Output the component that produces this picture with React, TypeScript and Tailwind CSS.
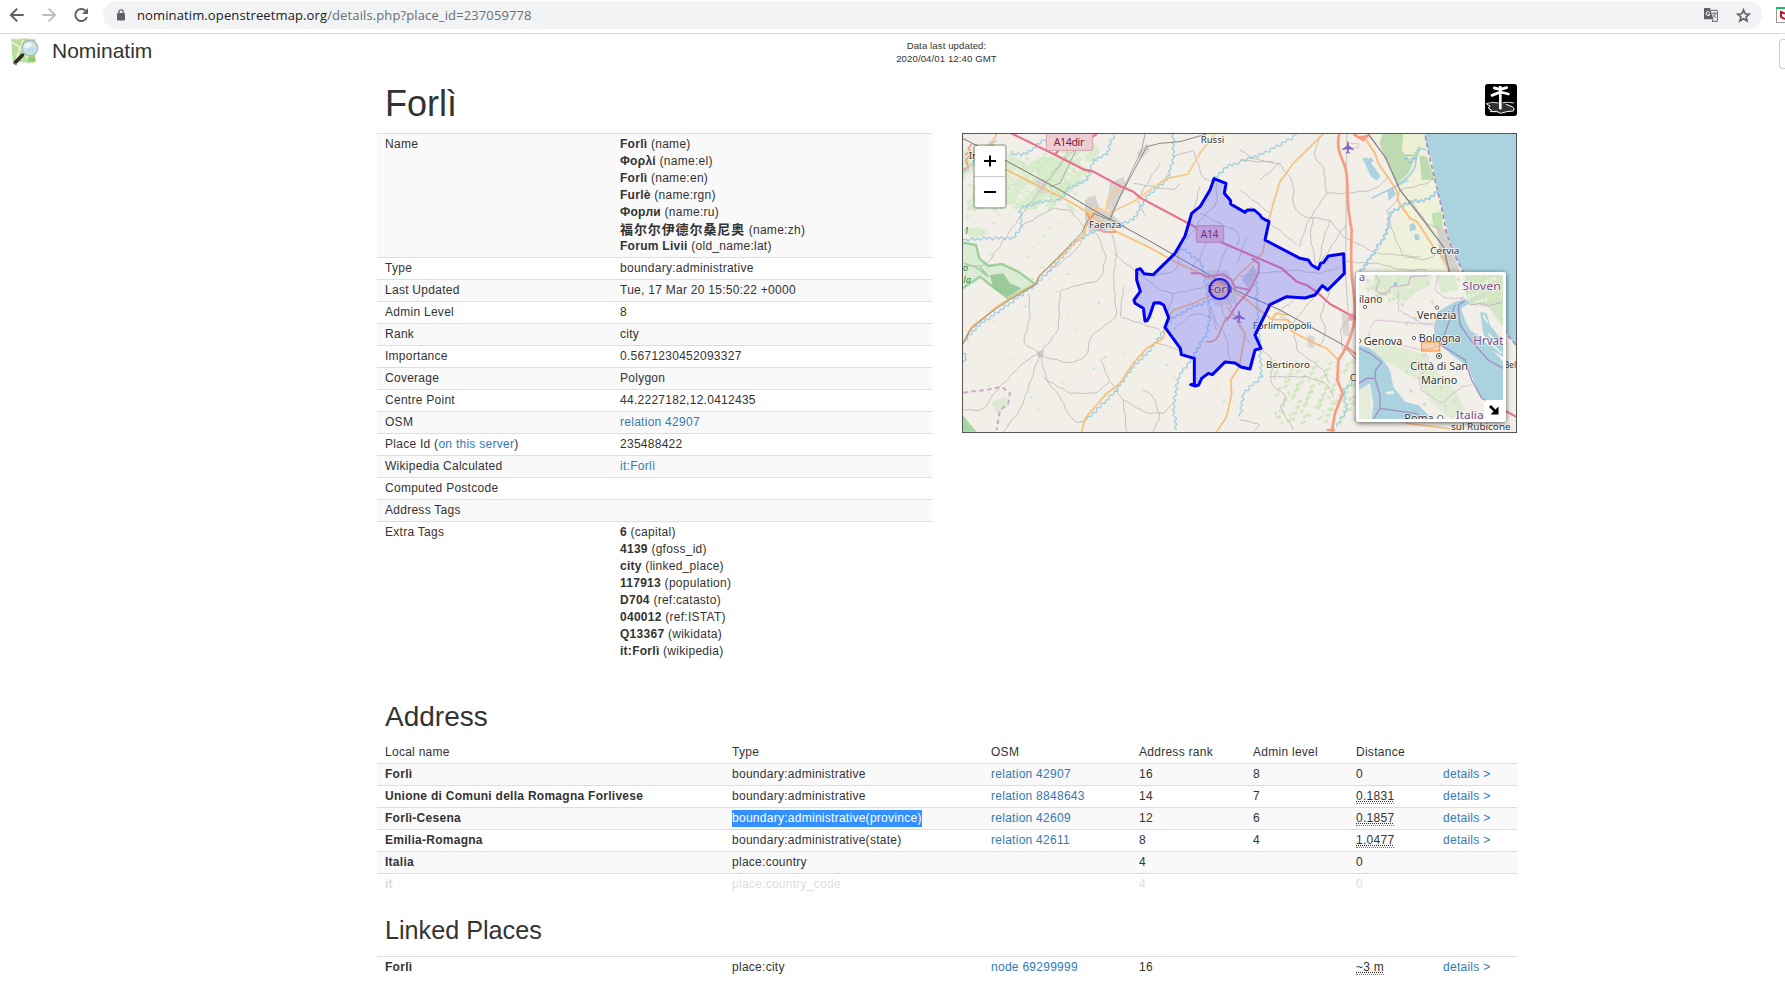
import React from "react";

type Pt = [number, number];

/* Subdivides a polyline and pushes the points sideways, giving a meandering line. */
function meander(src: string, amp: number, step: number): string {
  const pts: Pt[] = src.split(" ").map((p) => p.split(",").map(Number) as Pt);
  const out: string[] = [];
  let k = 1;
  for (let i = 0; i < pts.length - 1; i++) {
    const [x1, y1] = pts[i];
    const [x2, y2] = pts[i + 1];
    const len = Math.hypot(x2 - x1, y2 - y1) || 1;
    const n = Math.max(1, Math.round(len / step));
    for (let j = 0; j < n; j++) {
      const t = j / n;
      const side = (k % 2 ? 1 : -1) * amp * (0.5 + 0.5 * Math.abs(Math.sin(k * 2.3 + x1)));
      const off = i === 0 && j === 0 ? 0 : side;
      out.push(
        `${(x1 + (x2 - x1) * t - ((y2 - y1) / len) * off).toFixed(1)},${(y1 + (y2 - y1) * t + ((x2 - x1) / len) * off).toFixed(1)}`
      );
      k++;
    }
  }
  out.push(pts[pts.length - 1].join(","));
  let d = `M${out[0]}`;
  for (let i = 1; i < out.length - 1; i++) {
    const [ax, ay] = out[i].split(",").map(Number);
    const [bx, by] = out[i + 1].split(",").map(Number);
    d += `Q${ax},${ay} ${((ax + bx) / 2).toFixed(1)},${((ay + by) / 2).toFixed(1)}`;
  }
  return d + `L${out[out.length - 1]}`;
}

const rivers: string[] = [
  "8,330 80,325 160,325 185,290 180,235 240,215 300,210 325,175 380,150 400,90 440,75 460,15",
  "150,75 200,70 240,40 270,15",
  "8,640 50,590 150,520 230,460 290,400 340,340 400,305 470,285 520,270 560,200 620,150 640,90 640,12",
  "380,870 420,830 470,780 520,710 570,660 600,620 630,570 700,530 760,510",
  "650,900 640,830 655,740 700,680 740,610 750,560 745,500",
  "745,500 725,400 660,350",
  "760,150 800,110 840,95",
  "840,95 900,75 960,45 1010,15",
  "840,860 850,790 905,740 890,500 890,440",
  "1200,430 1240,370 1280,310 1290,250 1350,215 1400,210 1440,180",
  "1130,890 1160,840 1150,780 1200,740",
  "8,130 30,110 60,60 110,30",
  "8,700 20,680 8,660",
];

const minorRoads: string[] = [
  "8,410 80,405 180,260 240,180 320,80 400,20",
  "180,290 280,235 330,240 380,300 350,360 260,430",
  "410,310 440,380 420,450 300,480 295,600 240,670 190,640 210,560 205,490",
  "455,310 470,370 460,450 470,560 390,620 380,680 330,700 250,680",
  "460,370 560,450",
  "8,840 70,840 110,780 200,690 240,670",
  "240,670 210,760 180,840 130,905",
  "240,670 260,750 330,790 410,790 450,755 420,690 440,680",
  "250,740 300,800 330,860 350,880 380,870",
  "450,755 490,810 500,905",
  "490,810 560,850 610,850 640,820",
  "580,905 600,860 580,800 550,780",
  "490,470 480,560 600,600",
  "590,640 660,660 700,690",
  "250,170 310,90 350,15",
  "520,160 640,180 660,160",
  "640,80 700,60 730,150 780,150",
  "560,260 530,210 600,100",
  "700,250 720,170",
  "680,330 730,260 770,220 770,160",
  "580,440 650,420 660,350",
  "560,450 600,480 640,490 700,480 760,460",
  "640,490 620,560",
  "720,250 840,310 830,350",
  "770,480 800,500 840,590 870,640",
  "780,510 790,560 830,570",
  "750,530 770,580 800,620 810,690",
  "640,600 700,550 760,560 770,600",
  "690,420 720,380 740,340",
  "800,350 770,430",
  "840,440 900,430 1000,420 1080,430 1140,410",
  "860,320 830,400",
  "840,90 960,100 1000,160 1000,230 1030,260 1110,270 1150,320 1250,370 1380,380",
  "840,60 890,90 940,95",
  "900,150 960,100",
  "1080,15 1060,80 1090,110 1100,190 1040,280 1020,350",
  "1100,190 1160,190 1240,180 1290,140",
  "870,230 1010,345",
  "840,180 930,250",
  "1060,260 1050,320 1070,410",
  "1110,270 1090,330 1075,410",
  "1160,280 1080,400",
  "1150,395 1250,400 1330,420 1400,420",
  "1110,480 1080,560 1100,600 1080,650 1040,620",
  "1065,495 1000,580 960,560",
  "1000,580 1010,660 1090,720 1110,760",
  "1000,510 940,560 930,600",
  "905,660 940,690 930,760 980,800 960,830",
  "930,740 1040,740 1100,760 1120,800",
  "960,830 1000,900",
  "840,870 900,880 880,905",
  "1160,570 1140,600 1150,660",
  "1320,180 1400,160 1430,140",
  "1320,180 1300,230 1280,240",
  "1350,210 1400,280 1440,300",
  "1280,240 1300,310 1330,380 1400,390 1440,360",
];

const woods: string[] = [
  "100,60 150,75 200,100 250,80 330,80 400,130 380,150 300,215 260,200 220,240 170,235 130,210 60,240 20,240 60,120",
  "8,60 50,50 60,90 30,130 8,150",
  "300,12 380,12 420,60 400,100 340,80 280,60",
  "8,300 60,290 90,310 40,325",
];

const boundary =
  "762,146 798,160 793,190 812,212 812,222 855,247 862,240 883,240 900,255 906,264 927,275 915,330 1020,385 1045,390 1055,405 1075,417 1082,400 1090,398 1105,378 1151,371 1153,430 1103,480 1087,467 1065,495 1035,504 980,500 930,524 885,615 903,655 885,660 870,717 843,711 825,699 795,696 757,734 745,730 725,745 716,765 706,768 692,764 703,762 703,685 664,674 661,655 615,592 626,563 611,525 598,518 582,519 568,560 561,572 555,573 550,535 525,520 522,510 541,484 530,450 530,420 541,416 552,431 580,434 645,370 675,318 695,250 720,230 750,180";

const Line = ({ d, c, w }: { d: string; c: string; w: number }) => (
  <polyline points={d} fill="none" stroke={c} strokeWidth={w} strokeLinejoin="round" />
);

const Label = ({ x, y, s = 29, c = "#333", w, children }: { x: number; y: number; s?: number; c?: string; w?: number; children: string }) => (
  <text
    x={x}
    y={y}
    fontSize={s}
    fill={c}
    textLength={w}
    lengthAdjust="spacingAndGlyphs"
    stroke="#fff"
    strokeOpacity={0.75}
    strokeWidth={5}
    paintOrder="stroke"
    fontFamily='"Noto Sans", sans-serif'
  >
    {children}
  </text>
);

const plane = "M-2,-17 Q0,-21 2,-17 L3,-6 L17,4 L17,8 L3,4 L2,12 L7,16 L7,18 L0,16 L-7,18 L-7,16 L-2,12 L-3,4 L-17,8 L-17,4 L-3,-6Z";

function MapDrawing() {
  return (
    <svg viewBox="9 12 1659 894" className="block h-[298px] w-[553px]" preserveAspectRatio="none">
      <rect x="0" y="0" width="1700" height="920" fill="#f2efe9" />
      {/* farmland and woods */}
      <path d="M1240,12 L1395,12 L1440,180 L1480,420 L1280,430 L1240,400 L1290,290 L1340,230 L1300,130Z" fill="#f0f1da" />
      {woods.map((p, i) => (
        <polygon key={i} points={p} fill="#cdeac0" opacity={0.65} />
      ))}
      {Array.from({ length: 260 }, (_, i) => {
        const x = 12 + ((i * 97 + (i % 7) * 13) % 370);
        const y = 60 + ((i * 61 + (i % 5) * 17) % (i % 4 ? 180 : 400));
        return <path key={i} d={`M${x},${y} l${4 + (i % 5) * 3},-4 l4,6 l-6,${2 + (i % 4) * 3} l-6,-3Z`} fill={i % 3 ? "#cfeabf" : "#f2efe9"} opacity={0.85} />;
      })}
      {Array.from({ length: 170 }, (_, i) => {
        const x = 940 + ((i * 83 + (i % 7) * 19) % 250);
        const y = 690 + ((i * 47 + (i % 6) * 11) % 190);
        return <path key={i} d={`M${x},${y} l5,-4 l5,6 l-4,${3 + (i % 4) * 2} l-5,-3Z`} fill="#cbe6b8" opacity={0.8} />;
      })}
      {Array.from({ length: 40 }, (_, i) => {
        const x = 20 + ((i * 149) % 800);
        const y = 420 + ((i * 71) % 470);
        return <path key={i} d={`M${x},${y} l6,-4 l3,6 l-6,4Z`} fill={i % 4 ? "#dcecd0" : "#bfe6f0"} />;
      })}
      <path d="M8,335 L45,340 L60,390 L85,405 L130,400 L180,425 L225,460 L190,485 L145,505 L110,480 L90,460 L60,440 L8,475Z" fill="#dcebd4" />
      <path d="M90,435 L130,430 L150,460 L185,475 L145,500 L100,475Z" fill="#9ccb9a" />
      <path d="M10,338 L48,345 L58,385 L85,408 L125,402 L175,425 L225,462 L180,487 L145,506 L85,460 L60,440 L8,475" fill="none" stroke="#86c48b" strokeWidth="7" opacity="0.75" />
      <path d="M12,400 L45,410 L85,440 L60,410" fill="none" stroke="#86c48b" strokeWidth="5" opacity="0.7" />
      <path d="M8,855 L50,905 L8,905Z" fill="#a9d5a4" />
      <path d="M95,815 L140,800 L145,830 L110,850Z" fill="#dbead2" />
      <path d="M1268,12 L1330,12 L1385,45 L1345,130 L1312,160 L1285,100 L1258,40Z" fill="#bddab1" />
      <path d="M1330,12 L1393,12 L1398,50 L1375,50 L1350,90 L1325,60Z" fill="#edf0d3" />
      <path d="M1378,75 L1400,80 L1424,150 L1385,150Z" fill="#bddab1" />
      <path d="M1415,250 L1445,245 L1450,310 L1420,290Z" fill="#bfe3b0" />
      {/* built-up areas */}
      <path d="M375,210 L405,195 L420,240 L450,250 L500,290 L440,300 L390,310 L375,270Z" fill="#d5d2ce" />
      <path d="M450,160 L490,140 L500,170 L455,250 L440,230Z" fill="#d9d6d2" />
      <path d="M530,70 L560,40 L570,60 L540,90Z" fill="#d9d6d2" />
      <path d="M225,150 L255,145 L262,190 L235,190Z" fill="#d9d6d2" />
      <path d="M230,665 L252,660 L250,682 L235,682Z" fill="#d2cfcb" />
      <path d="M740,420 L800,420 L830,470 L830,520 L770,530 L740,490Z" fill="#dedbd7" />
      <path d="M845,450 L880,405 L892,430 L868,478Z" fill="#cfccd0" />
      <path d="M1430,290 L1462,300 L1475,360 L1500,425 L1465,425 L1440,380Z" fill="#d3d0cc" />
      <path d="M1145,550 L1165,550 L1170,620 L1148,615Z" fill="#dad7d3" />
      <path d="M1045,615 L1065,620 L1060,655 L1042,650Z" fill="#dad7d3" />
      {/* water */}
      <path
        d="M1393,10 L1400,50 L1415,90 L1425,150 L1445,230 L1462,300 L1480,370 L1512,430 L1560,520 L1640,610 L1675,660 L1675,10Z"
        fill="#aad3df"
      />
      <path d="M1207,85 L1220,82 L1262,138 L1250,152 L1232,138Z M1222,90 L1234,80 L1240,95 L1230,98Z" fill="#aad3df" />
      <path d="M1282,180 L1300,170 L1306,195 L1286,212Z M1348,285 L1362,278 L1370,297 L1350,305Z M1362,312 l14,0 l4,16 l-14,4Z" fill="#aad3df" />
      <path d="M1235,205 L1345,150" stroke="#aad3df" strokeWidth="5" />
      <path d="M1310,165 Q1370,130 1368,90 Q1375,45 1398,60" fill="none" stroke="#a5cfe0" strokeWidth="5" />
      <path d="M1338,76h20 M1333,86h12 M1355,86h15 M1345,97h10" stroke="#7ab8e8" strokeWidth="3" />
      {rivers.map((r, i) => (
        <path key={i} d={meander(r, 8, 9)} fill="none" stroke="#a5d0e2" strokeWidth={i === 9 ? 6 : 4.2} />
      ))}
      {/* minor roads */}
      {minorRoads.map((r, i) => (
        <path key={i} d={meander(r, 3.5, 22)} fill="none" stroke="#bdbbb8" strokeWidth="2.6" />
      ))}
      <path d="M1160,12 L1157,440 L1165,560" fill="none" stroke="#cfcdca" strokeWidth="4" />
      {/* main roads */}
      <Line d="135,117 230,165 330,215 385,248 420,275 470,305 560,348 640,392 740,440 800,470" c="#f9be72" w={5} />
      <path d="M380,255 L410,232 L450,248 L520,215 L620,145 L683,133 L720,70 L765,12" fill="none" stroke="#f9c987" strokeWidth="5" />
      <path d="M440,240 Q435,195 482,175" fill="none" stroke="#f9c987" strokeWidth="5" />
      <Line d="8,640 35,590 75,560 110,530 150,505 228,460 240,435 300,380 370,315 385,270 410,245" c="#f9be72" w={5} />
      <Line d="6,648 32,598 72,564 106,538 148,510 226,464 236,440 300,376 366,308 380,275 405,250" c="#777" w={2.4} />
      <Line d="365,905 375,865 410,825 440,790 480,760 520,700 560,655 610,625 620,570 640,540 700,520 745,500 760,480" c="#f9be72" w={5} />
      <path d="M770,905 L800,860 L815,790 L812,750 L838,710 L855,610 L825,560 L800,530" fill="none" stroke="#f9be72" strokeWidth="5" />
      <path d="M738,635 Q770,640 780,605 L800,560" fill="none" stroke="#f0a070" strokeWidth="5" />
      <path d="M1090,12 L1000,100 L960,155 L940,220 L925,275 L908,370 L840,430 L815,460" fill="none" stroke="#f9c080" strokeWidth="5" />
      <Line d="800,470 860,510 935,568 985,570 990,600 1060,640 1100,655 1135,690" c="#f9be72" w={5} />
      <path d="M935,568 L948,550 L985,555" fill="none" stroke="#f9be72" strokeWidth="5" />
      <path d="M1212,20 L1245,70 L1255,100 L1310,180 L1315,215 L1350,265 L1372,275 L1420,350 L1450,380 L1470,425" fill="none" stroke="#f9c080" strokeWidth="6" />
      <path d="M1300,700 L1340,880 L1500,900" fill="none" stroke="#f9c080" strokeWidth="5" />
      {/* railways */}
      <Line d="8,25 140,93 300,180 400,240 560,328 660,385 840,487 960,540 1150,645 1190,690" c="#777" w={3} />
      <Line d="400,250 450,270 480,200 560,50 600,40 660,35 740,12" c="#888" w={3} />
      <Line d="450,262 545,60 555,12" c="#999" w={2.5} />
      <Line d="270,170 300,160 370,15" c="#999" w={2.5} />
      <path d="M1225,12 L1275,80 L1320,180 L1390,270 L1450,350 L1468,425" fill="none" stroke="#858585" strokeWidth="4" />
      {/* trunk roads */}
      <path d="M1138,12 Q1128,45 1145,85 Q1165,120 1162,190 Q1165,250 1175,300 Q1172,370 1175,440 Q1190,540 1180,590 Q1165,650 1135,690 L1132,750 L1148,790 L1125,850 L1115,905" fill="none" stroke="#f79b83" strokeWidth="8" />
      <path d="M1180,12 L1210,30 L1222,14 M1195,22 L1225,20" stroke="#f79b83" strokeWidth="8" fill="none" />
      <path d="M1160,650 L1195,680 M1100,900 L1125,900" stroke="#f79b83" strokeWidth="7" />
      <path d="M8,120 L25,112 L18,90 L35,70 L25,55 L35,42 M15,75 L30,65" fill="none" stroke="#f79b83" strokeWidth="5" />
      <path d="M55,60 L90,50 L110,12 M120,70 L95,40" fill="none" stroke="#f9c080" strokeWidth="5" />
      <path d="M380,250 L400,285 L430,305 L468,306" fill="none" stroke="#f79b83" strokeWidth="6" />
      <path d="M692,430 L720,430 L740,440 L790,433 L815,450 L822,470 L870,480 L895,430 L897,400 L875,385" fill="none" stroke="#e88495" strokeWidth="6" />
      <path d="M870,480 L830,525 L800,572" fill="none" stroke="#e88495" strokeWidth="6" />
      {/* motorway */}
      <Line d="150,8 285,74 370,118 400,125 480,168 520,185 540,203 700,288 780,335 860,370 965,415 1010,455 1040,465 1075,490 1110,522 1180,560 1300,660 1668,860" c="#e8718d" w={6.5} />
      <Line d="285,74 300,55 380,30 410,12" c="#e8718d" w={6.5} />
      <path d="M1165,550 h18 v22 h-18Z" fill="#e892a2" opacity="0.8" />
      {/* administrative borders */}
      <path d="M10,788 L30,785 L80,780 L125,770 L150,790 L145,820 L120,840 L110,900" fill="none" stroke="#d3a9d3" strokeWidth="6" strokeDasharray="14 10" />
      <path d="M1396,18 L1408,80 L1425,150 L1445,235 L1460,310 L1482,372 L1512,430 L1580,540 L1668,645" fill="none" stroke="#b08bc0" strokeWidth="5" strokeDasharray="13 9" />
      <path d="M1165,41 h30 v12 h-20" fill="none" stroke="#d5cfc4" strokeWidth="3" />
      <path transform="translate(1164,53)" d={plane} fill="#8461c4" />
      <path transform="translate(837,561)" d={plane} fill="#8461c4" />
      {/* road shields */}
      <rect x="259" y="8" width="139" height="53" rx="5" fill="#edced4" stroke="#d9a0ab" strokeWidth="3" />
      <text x="281" y="47" fontSize="32" textLength="92" fill="#7a1a3c" fontFamily='"Noto Sans", sans-serif'>A14dir</text>
      <rect x="709" y="287" width="82" height="50" rx="5" fill="#e9bcc8" stroke="#d68fa3" strokeWidth="3" />
      <text x="722" y="323" fontSize="31" textLength="53" fill="#6a1540" fontFamily='"Noto Sans", sans-serif'>A14</text>
      {/* place names */}
      <Label x={26} y={87}>Im</Label>
      <Label x={722} y={38} w={71}>Russi</Label>
      <Label x={387} y={295} w={97}>Faenza</Label>
      <Label x={742} y={489} s={35} w={76}>Forlì</Label>
      <Label x={878} y={596} w={177}>Forlimpopoli</Label>
      <Label x={918} y={713} w={132}>Bertinoro</Label>
      <Label x={1411} y={371} w={87}>Cervia</Label>
      <Label x={1169} y={752}>C</Label>
      <Label x={1632} y={715} w={36}>Bel</Label>
      <Label x={1473} y={901} s={27} w={179}>sul Rubicone</Label>
      <g fontStyle="italic" fontSize="27" fill="#1f8a2a" fontFamily='"Noto Sans", sans-serif'>
        <text x="12" y="311">1</text>
        <text x="9" y="422">o</text>
        <text x="10" y="458">la</text>
      </g>
      {/* selected area */}
      <polygon points={boundary} fill="#6464ff" fillOpacity="0.33" stroke="#0000f5" strokeWidth="9" strokeLinejoin="round" />
      <circle cx="779" cy="477" r="30" fill="#c06070" fillOpacity="0.25" stroke="#1a1af0" strokeWidth="6" />
    </svg>
  );
}

function MiniMap() {
  return (
    <svg viewBox="12 15 432 432" className="block size-36">
      <rect x="0" y="0" width="460" height="460" fill="#f2efe9" />
      <path d="M60,15 L230,15 L220,50 L180,70 L150,95 L110,75 L75,80 L50,50Z M240,15 L300,15 L310,60 L260,70Z" fill="#dcebcf" />
      <path d="M330,15 L444,15 L444,170 L400,110 L345,105 L330,60Z" fill="#d3e7c4" />
      <path d="M50,215 L110,225 L200,250 L240,300 L300,360 L330,420 L290,447 L230,400 L190,330 L120,290 L60,260Z" fill="#dfebd3" />
      {Array.from({ length: 90 }, (_, i) => {
        const x = 25 + ((i * 71) % 400);
        const y = 20 + ((i * 43) % (x > 130 && x < 320 ? 420 : 80));
        return <path key={i} d={`M${x},${y} l7,-5 l5,7 l-6,8Z`} fill={i % 2 ? "#cfe3c2" : "#e9eedd"} />;
      })}
      {/* seas */}
      <path d="M240,160 L248,125 L300,95 L335,88 L345,100 L318,115 L330,150 L345,180 L375,215 L400,260 L444,310 L444,400 L395,400 L370,370 L340,290 L290,255 L250,220 L238,190Z" fill="#aad3df" />
      <path d="M375,125 L395,130 L405,165 L444,215 L444,260 L410,240 L385,190Z" fill="#aad3df" />
      <path d="M345,180 L380,205 L444,275 L444,315 L400,262Z" fill="#aad3df" />
      <path d="M385,135 L398,160 M400,190 L430,225 M395,210 L440,250" stroke="#e8efe0" strokeWidth="6" />
      <path d="M12,225 L45,235 L80,265 L105,300 L115,350 L150,395 L190,405 L220,435 L225,447 L50,447 L55,400 L45,340 L12,360Z" fill="#aad3df" />
      <path d="M12,360 L42,345 L50,370 L45,447 L12,447Z" fill="#e5ecd8" />
      <path d="M90,366 l25,-3 l2,8 l-20,3Z" fill="#eef0e4" />
      <circle cx="121" cy="42" r="5" fill="#8ab8e8" />
      {/* sea borders */}
      <path d="M12,235 L45,250 L80,277 L62,300 L60,325 L75,375 L75,415 L180,430 L215,447" fill="none" stroke="#a08ec8" strokeWidth="4" />
      <path d="M12,340 L35,325 L60,325 M75,415 L55,447" fill="none" stroke="#a08ec8" strokeWidth="4" />
      <path d="M330,92 L310,105 L315,165 L350,215 L400,270 L444,295 M300,105 L275,175 L258,225 L330,270 L350,330 L380,385 L400,395" fill="none" stroke="#a08ec8" strokeWidth="4" />
      {/* land borders */}
      <path
        d={
          meander("60,15 75,35 60,60 90,75 110,50 160,45 165,20 230,15", 3, 9) +
          meander("345,106 380,100 400,108 444,95", 3, 9)
        }
        fill="none"
        stroke="#cba6d0"
        strokeWidth="3"
      />
      <path
        d={
          meander("130,60 130,120 165,140 200,160 250,160", 3, 10) +
          meander("45,175 60,150 130,155 240,165 240,190", 3, 10) +
          meander("40,185 50,225 110,220 200,240 250,230", 3, 10) +
          meander("250,15 240,60 270,85 330,85", 3, 10) +
          meander("190,320 200,360 260,400 320,350 350,345", 3, 10) +
          meander("210,250 230,290 200,310", 3, 10)
        }
        fill="none"
        stroke="#d3b4d6"
        strokeWidth="2.5"
      />
      <g fill="#fff" stroke="#444" strokeWidth="2.5">
        <circle cx="30" cy="111" r="5" />
        <circle cx="246" cy="113" r="5" />
        <circle cx="177" cy="204" r="5" />
        <circle cx="13" cy="213" r="5" />
        <circle cx="252" cy="258" r="8" />
        <circle cx="252" cy="258" r="2.5" fill="#444" />
        <circle cx="256" cy="444" r="8" />
      </g>
      <Label x={12} y={98} w={70} s={32}>ilano</Label>
      <Label x={186} y={147} w={118} s={32}>Venezia</Label>
      <Label x={26} y={224} w={116} s={32}>Genova</Label>
      <Label x={191} y={216} w={126} s={32}>Bologna</Label>
      <Label x={166} y={300} w={173} s={32}>Città di San</Label>
      <Label x={198} y={341} w={109} s={32}>Marino</Label>
      <Label x={148} y={457} w={88} s={32}>Roma</Label>
      <Label x={12} y={34} s={33} c="#7f4a8e">a</Label>
      <Label x={322} y={59} w={116} s={35} c="#7f4a8e">Sloven</Label>
      <Label x={355} y={225} w={90} s={36} c="#7f4a8e">Hrvat</Label>
      <Label x={302} y={447} w={84} s={35} c="#7f4a8e">Italia</Label>
      <rect x="200" y="216" width="54" height="27" fill="#ff7800" fillOpacity="0.22" stroke="#ff7800" strokeOpacity="0.65" strokeWidth="4" />
    </svg>
  );
}

function BrowserBar() {
  return (
    <div className="flex h-[34px] shrink-0 items-start border-b border-[#d8dadc] bg-white">
      <svg viewBox="0 0 103 30" className="h-[30px] w-[103px] shrink-0" fill="none" stroke="#5f6368" strokeWidth="2">
        <path d="M23.7,15H11.5M17.2,8.6L10.8,15L17.2,21.4" />
        <path d="M42.2,15H54.4M48.7,8.6L55.1,15L48.7,21.4" stroke="#bcbec1" />
        <path d="M85.6,10.8A6,6 0 1 0 87,17" />
        <path d="M88,8V14H82Z" fill="#5f6368" stroke="none" />
      </svg>
      <div className="mt-px flex h-7 w-[1659px] shrink-0 items-center rounded-full bg-[#f1f3f4] pl-[13px] pr-[11px]">
        <svg viewBox="0 0 10 12" className="h-3 w-[10px]">
          <rect x="1" y="4" width="8" height="7.5" rx="1" fill="#5f6368" />
          <path d="M2.9,5V3A2.1,2.1 0 0 1 7.1,3V5" fill="none" stroke="#5f6368" strokeWidth="1.3" />
        </svg>
        <div className="ml-[11px] whitespace-nowrap font-['Open_Sans',sans-serif] text-[13px] leading-7 tracking-[0.12px] text-[#6a6e72]">
          <span className="text-[#202124]">nominatim.openstreetmap.org</span>/details.php?place_id=237059778
        </div>
        <svg viewBox="0 0 42 42" className="ml-auto size-[14px]">
          <path d="M0,0H18L28,34H2Q0,34 0,32Z" fill="#5f6368" />
          <path d="M20,7H40V40H24L28,34" fill="none" stroke="#5f6368" strokeWidth="3" />
          <path d="M17,13A6,6 0 1 0 18,19H12" fill="none" stroke="#fff" strokeWidth="3" />
          <path d="M24,16H38M31,12V16M35,16Q33,25 26,29M27,19Q30,26 36,29" fill="none" stroke="#5f6368" strokeWidth="2.5" />
        </svg>
        <svg viewBox="0 0 24 24" className="ml-[18px] size-[15px]" fill="none" stroke="#5f6368" strokeWidth="2.6">
          <path d="M12,3L14.6,9.3L21.3,9.8L16.2,14.2L17.8,20.8L12,17.3L6.2,20.8L7.8,14.2L2.7,9.8L9.4,9.3Z" />
        </svg>
      </div>
      <svg viewBox="0 0 9 16" className="ml-[14px] mt-[7px] h-4 w-[9px]">
        <rect x="0.5" y="0.5" width="14" height="15" fill="#fff" stroke="#999" />
        <rect x="0" y="0" width="9" height="2" fill="#12c469" />
        <path d="M9,6.5L5,5V10L9,12" fill="none" stroke="#c8102e" strokeWidth="2" />
      </svg>
    </div>
  );
}

function Logo() {
  return (
    <svg viewBox="30 114 92 92" className="size-[30px]">
      <path d="M34,118 Q48,124 62,119 Q78,116 92,122 L108,120 L106,160 L110,190 Q95,198 78,192 Q60,188 40,198 L36,165Z" fill="#b9dd9c" />
      <path d="M36,130 L60,145 L50,180 M70,122 L62,150 L95,192" fill="none" stroke="#e9f4c8" strokeWidth="5" />
      <path d="M40,150 L56,160 M85,180 L104,172" stroke="#e8b7a0" strokeWidth="3" />
      <path d="M84,178 L106,172 L106,190 L88,190Z" fill="#8fcc70" />
      <circle cx="91" cy="148" r="24" fill="#c9e3e4" stroke="#a9b4b8" strokeWidth="4" />
      <ellipse cx="86" cy="140" rx="13" ry="8" fill="#eaf5f4" />
      <circle cx="94" cy="152" r="8" fill="#b9dcf0" />
      <path d="M75,165 L66,172" stroke="#9aa" strokeWidth="6" />
      <path d="M68,170 L46,192" stroke="#2b2b2b" strokeWidth="11" strokeLinecap="round" />
      <path d="M42,192 L50,200" stroke="#8a6a4a" strokeWidth="4" />
    </svg>
  );
}

function IslandIcon() {
  return (
    <svg viewBox="135 252 96 96" className="size-8">
      <rect x="135" y="252" width="96" height="96" rx="8" fill="#000" />
      <path d="M148,312 Q180,302 210,314 Q226,322 220,332 Q180,344 150,336 Q142,325 148,312Z" fill="#333" />
      <path d="M140,312 L150,318 L145,324 L154,330 L152,335 L170,334 L182,340 L200,335 L220,333 Q228,322 208,317 L198,313" fill="none" stroke="#fff" strokeWidth="3" />
      <path d="M138,311 Q160,304 176,309 M188,308 Q205,305 222,309" fill="none" stroke="#fff" strokeWidth="2.6" />
      <path d="M181,258V328" stroke="#fff" strokeWidth="8" />
      <path d="M181,276 L156,286 M181,276 L205,282 M181,268 L163,264 M181,268 L200,263" fill="none" stroke="#fff" strokeWidth="8.5" strokeLinecap="round" />
    </svg>
  );
}

const A = ({ children }: { children: React.ReactNode }) => (
  <a href="#" className="text-[#337ab7]">{children}</a>
);

const Tags = ({ items }: { items: [string, string][] }) => (
  <>
    {items.map(([v, k]) => (
      <div key={k} className="h-[17px] whitespace-nowrap">
        <b className={k === "name:zh" ? "text-[13px] tracking-[0.9px]" : ""}>{v}</b> ({k})
      </div>
    ))}
  </>
);

const details: [React.ReactNode, React.ReactNode][] = [
  [
    "Name",
    <Tags
      items={[
        ["Forlì", "name"],
        ["Φορλί", "name:el"],
        ["Forlì", "name:en"],
        ["Furlè", "name:rgn"],
        ["Форли", "name:ru"],
        ["福尔尔伊德尔桑尼奥", "name:zh"],
        ["Forum Livii", "old_name:lat"],
      ]}
    />,
  ],
  ["Type", "boundary:administrative"],
  ["Last Updated", "Tue, 17 Mar 20 15:50:22 +0000"],
  ["Admin Level", "8"],
  ["Rank", "city"],
  ["Importance", "0.5671230452093327"],
  ["Coverage", "Polygon"],
  ["Centre Point", "44.2227182,12.0412435"],
  ["OSM", <A>relation 42907</A>],
  [<>Place Id (<A>on this server</A>)</>, "235488422"],
  ["Wikipedia Calculated", <A>it:Forlì</A>],
  ["Computed Postcode", ""],
  ["Address Tags", ""],
  [
    "Extra Tags",
    <Tags
      items={[
        ["6", "capital"],
        ["4139", "gfoss_id"],
        ["city", "linked_place"],
        ["117913", "population"],
        ["D704", "ref:catasto"],
        ["040012", "ref:ISTAT"],
        ["Q13367", "wikidata"],
        ["it:Forlì", "wikipedia"],
      ]}
    />,
  ],
];

interface Place {
  name: string;
  type: string;
  osm?: string;
  rank: string;
  level?: string;
  distance: string;
  link?: boolean;
  selected?: boolean;
  unused?: boolean;
}

const address: Place[] = [
  { name: "Forlì", type: "boundary:administrative", osm: "relation 42907", rank: "16", level: "8", distance: "0", link: true },
  { name: "Unione di Comuni della Romagna Forlivese", type: "boundary:administrative", osm: "relation 8848643", rank: "14", level: "7", distance: "0.1831", link: true },
  { name: "Forlì-Cesena", type: "boundary:administrative(province)", osm: "relation 42609", rank: "12", level: "6", distance: "0.1857", link: true, selected: true },
  { name: "Emilia-Romagna", type: "boundary:administrative(state)", osm: "relation 42611", rank: "8", level: "4", distance: "1.0477", link: true },
  { name: "Italia", type: "place:country", rank: "4", distance: "0" },
  { name: "it", type: "place:country_code", rank: "4", distance: "0", unused: true },
];

const cols = "grid grid-cols-[347px_259px_148px_114px_103px_87px_82px] px-2";

function PlaceRow({ p, striped }: { p: Place; striped: boolean }) {
  return (
    <div
      className={`${cols} h-[22px] border-t border-[#ddd] pt-0.5 ${p.unused ? "text-[#ddd]" : ""} ${striped ? "bg-[#f9f9f9]" : ""}`}
    >
      <b>{p.name}</b>
      <div>
        {p.selected ? <span className="inline-block h-[17px] bg-[#3390ff] text-white">{p.type}</span> : p.type}
      </div>
      <div>{p.osm && <A>{p.osm}</A>}</div>
      <div>{p.rank}</div>
      <div>{p.level}</div>
      <div>
        {p.distance === "0" ? (
          "0"
        ) : (
          <abbr className="inline-block h-4 border-b border-dotted border-[#777] underline decoration-dotted">{p.distance}</abbr>
        )}
      </div>
      <div>{p.link && <A>details &gt;</A>}</div>
    </div>
  );
}

export default function App() {
  return (
    <div className="flex h-[989px] w-[1785px] flex-col overflow-hidden bg-white font-['Liberation_Sans','Noto_Sans_CJK_SC',sans-serif] text-[12px] leading-[17px] text-[#333]">
      <BrowserBar />
      <header className="flex h-[46px] shrink-0 items-start justify-between">
        <div className="flex w-[870px] items-start pl-[10px] pt-[3px]">
          <Logo />
          <span className="ml-[12px] text-[21px] leading-7">Nominatim</span>
        </div>
        <div className="-ml-[17px] w-[170px] pt-[5px] text-center text-[9.6px] leading-[13px] tracking-[0.1px]">
          Data last updated:
          <br />
          2020/04/01 12:40 GMT
        </div>
        <div className="flex w-[745px] justify-end pt-[5px]">
          <div className="h-[30px] w-[6px] rounded-l-[4px] border border-r-0 border-[#ccc]" />
        </div>
      </header>
      <main className="ml-[377px] w-[1140px] tracking-[0.27px]">
        <div className="flex h-[53px] justify-between pl-2">
          <h1 className="pt-[4px] text-[36px] leading-[40px] tracking-normal">Forlì</h1>
          <div className="pt-1">
            <IslandIcon />
          </div>
        </div>
        <div className="flex h-[562px] items-start justify-between">
          <div className="w-[555px]">
            {details.map(([k, v], i) => (
              <div
                key={i}
                className={`grid min-h-[22px] grid-cols-[235px_1fr] border-t border-[#ddd] px-2 py-0.5 ${i % 2 ? "" : "bg-[#f9f9f9]"}`}
              >
                <div>{k}</div>
                <div>{v}</div>
              </div>
            ))}
          </div>
          <div className="relative h-[300px] w-[555px] overflow-hidden border border-[#555] tracking-normal">
            <MapDrawing />
            <div className="absolute left-[10px] top-[10px] w-[34px] rounded-[4px] border-2 border-black/20 bg-clip-padding">
              <div className="flex h-[31px] items-center justify-center rounded-t-[2px] border-b border-[#ccc] bg-white">
                <svg viewBox="0 0 12 12" className="size-3"><path d="M6,0.5V11.5M0,6H12" stroke="#000" strokeWidth="2" /></svg>
              </div>
              <div className="flex h-[30px] items-center justify-center rounded-b-[2px] bg-white">
                <svg viewBox="0 0 12 12" className="size-3"><path d="M0,6H12" stroke="#000" strokeWidth="2" /></svg>
              </div>
            </div>
            <div className="absolute bottom-[10px] right-[10px] overflow-hidden rounded-[3px] border-[3px] border-white shadow-[0_1px_5px_rgba(0,0,0,0.65)]">
              <MiniMap />
              <div className="absolute bottom-0 right-0 flex size-[19px] items-center justify-center rounded-tl-[3px] bg-white">
                <svg viewBox="0 0 10 10" className="size-[10px]"><path d="M1,1L6.5,6.5" stroke="#000" strokeWidth="2.6" /><path d="M9.5,1.5V9.5H1.5Z" /></svg>
              </div>
            </div>
          </div>
        </div>
        <h2 className="h-[46px] pl-2 pt-[5px] text-[28px] leading-[34px] tracking-normal">Address</h2>
        <div className={`${cols} h-[22px] pt-[3px]`}>
          <div>Local name</div>
          <div>Type</div>
          <div>OSM</div>
          <div>Address rank</div>
          <div>Admin level</div>
          <div>Distance</div>
        </div>
        {address.map((p, i) => (
          <PlaceRow key={i} p={p} striped={i % 2 === 0} />
        ))}
        <h2 className="h-[61px] pl-2 pt-[18px] text-[25.2px] leading-[34px] tracking-normal">Linked Places</h2>
        <PlaceRow
          p={{ name: "Forlì", type: "place:city", osm: "node 69299999", rank: "16", distance: "~3 m", link: true }}
          striped={false}
        />
      </main>
    </div>
  );
}
